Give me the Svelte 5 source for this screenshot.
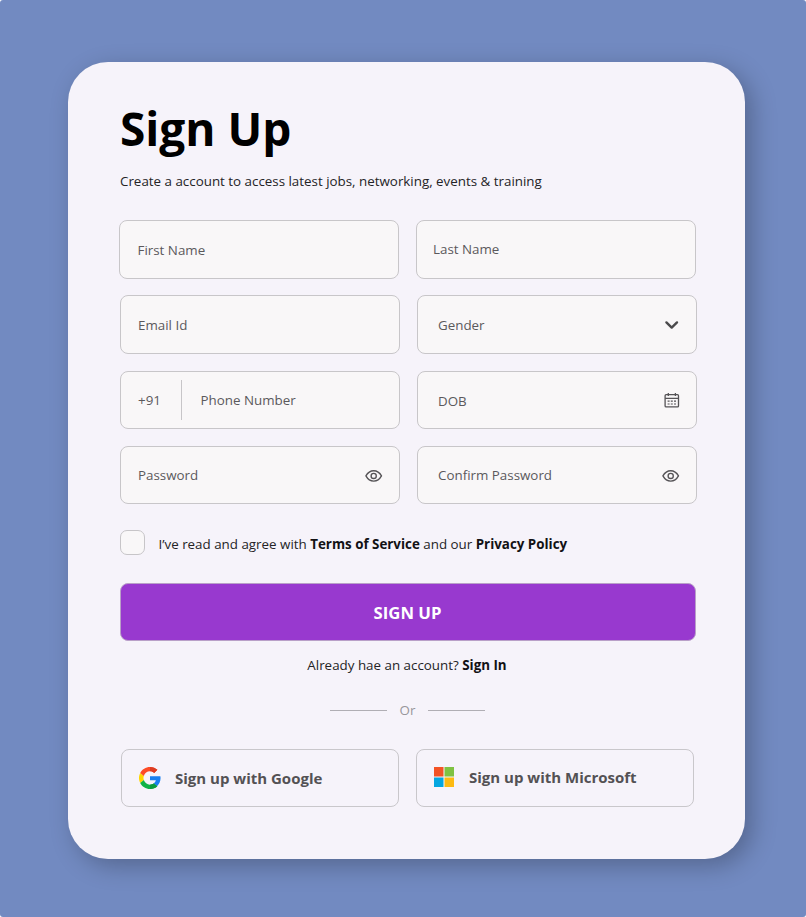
<script>
  const rows = [
    [{ label: 'First Name', pad: 17.5 }, { label: 'Last Name', pad: 16, lift: true }],
    [{ label: 'Email Id', pad: 17 }, { label: 'Gender', pad: 20, icon: 'chevron' }],
    [{ label: 'Phone Number', pad: 17, prefix: '+91' }, { label: 'DOB', pad: 20, icon: 'calendar', drop: true }],
    [{ label: 'Password', pad: 17, icon: 'eye' }, { label: 'Confirm Password', pad: 20, icon: 'eye' }]
  ];
</script>

{#snippet icon(name)}
  {#if name === 'chevron'}
    <svg class="icon" width="18" height="18" viewBox="0 0 18 18" fill="none" stroke="#4b4a4c" stroke-width="2.4" stroke-linecap="round" stroke-linejoin="round">
      <path d="M4.4 6.4 9.7 11.600l5.300-5.200" />
    </svg>
  {:else if name === 'calendar'}
    <svg class="icon" width="18" height="18" viewBox="0 0 18 18" fill="none" stroke="#555356" stroke-width="1.3">
      <rect x="3.1" y="3.7" width="13.4" height="12.2" rx="1" />
      <path d="M3.1 7.3h13.4M6.3 2.100v3M13.4 2.100v3" />
      <path d="M5.600 10.100h2M8.800 10.100h2M12 10.100h2M5.600 13h2M8.800 13h2M12 13h2" stroke-width="1.2" />
    </svg>
  {:else}
    <svg class="icon" width="18" height="18" viewBox="0 0 18 18" fill="none" stroke="#555356" stroke-width="1.35">
      <path d="M.9 9.9C2.700 6.700 5.500 4.700 8.700 4.700s6 2 7.800 5.200c-1.800 3.200-4.600 5.200-7.800 5.200S2.700 13.100.9 9.900z" stroke-linejoin="round" />
      <circle cx="8.7" cy="9.9" r="2.6" />
    </svg>
  {/if}
{/snippet}

<main class="page">
  <section class="card">
    <h1>Sign Up</h1>
    <p class="intro">Create a account to access latest jobs, networking, events &amp; training</p>

    <div class="fields">
      {#each rows as row, i}
        <div class="row" class:first={i === 0} class:short={i > 1}>
          {#each row as f}
            <div class="field" class:lift={f.lift} class:drop={f.drop} style="padding-left: {f.pad}px">
              {#if f.prefix}
                <span class="prefix">{f.prefix}</span>
                <span class="divider"></span>
              {/if}
              <span class="label">{f.label}</span>
              {#if f.icon}{@render icon(f.icon)}{/if}
            </div>
          {/each}
        </div>
      {/each}
    </div>

    <div class="agree">
      <span class="box"></span>
      <span>I’ve read and agree with <b>Terms of Service</b> and our <b>Privacy Policy</b></span>
    </div>

    <button class="submit">SIGN UP</button>
    <p class="signin">Already hae an account? <b>Sign In</b></p>

    <div class="or"><i></i><span>Or</span><i></i></div>

    <div class="social">
      <button class="provider google">
        <svg width="22" height="22" viewBox="0 0 48 48">
          <path fill="#1a7ff0" d="M47 24.500c0-1.600-.1-3.100-.4-4.500H24v9h12.700c-.6 3-2.200 5.400-4.700 7.100l7.300 5.700c4.500-4.200 7.700-10.300 7.700-17.300z" />
          <path fill="#fed500" d="M10.500 28.600A14.500 14.500 0 0 1 10.500 19.400L2.600 13.200a24 24 0 0 0 0 21.600z" />
          <path fill="#10b347" d="M24 48c6.500 0 11.900-2.100 15.900-5.800L32.200 36.200C30 37.700 27.200 38.500 24 38.500c-6.300 0-11.600-4.200-13.500-9.900L2.600 34.800C6.500 42.600 14.600 48 24 48z" />
          <path fill="#0a9a3e" d="M24 48c6.500 0 11.900-2.100 15.900-5.800L32.200 36.200C30 37.700 27.200 38.500 24 38.500z" />
          <path fill="#fd4b26" d="M24 9.500c3.500 0 6.700 1.200 9.200 3.600l6.900-6.900C35.900 2.400 30.500 0 24 0 14.600 0 6.500 5.400 2.600 13.200l7.900 6.200C12.400 13.700 17.700 9.500 24 9.500z" />
          <path fill="#dc3c22" d="M24 9.500c3.500 0 6.700 1.200 9.200 3.600l6.900-6.900C35.900 2.400 30.500 0 24 0z" />
        </svg>
        <span>Sign up with Google</span>
      </button>
      <button class="provider microsoft">
        <svg width="20" height="20" viewBox="0 0 20 20">
          <path fill="#f35325" d="M0 0h9.500v9.500H0z" />
          <path fill="#7fc242" d="M10.500 0H20v9.500h-9.500z" />
          <path fill="#05a6e0" d="M0 10.500h9.500V20H0z" />
          <path fill="#fdba12" d="M10.500 10.500H20V20h-9.500z" />
        </svg>
        <span>Sign up with Microsoft</span>
      </button>
    </div>
  </section>
</main>

<style>
  :global(body) { background: #fff; }
  .page {
    box-sizing: border-box;
    height: 917px;
    padding: 62px 61px 58px 68px;
    border-radius: 3px;
    background: #728ac1;
    font-family: 'Open Sans', sans-serif;
    font-size: 13.36px;
    line-height: 20px;
    color: #242326;
    overflow: hidden;
  }
  .card {
    box-sizing: border-box;
    height: 797px;
    padding: 33px 48px 0 52px;
    border-radius: 40px;
    background: #f6f3fa;
    box-shadow: 7px 7px 24px rgba(0, 0, 0, .26);
  }
  h1 { margin: 0; font-size: 46px; line-height: 66px; font-weight: 700; color: #000; }
  p { margin: 0; white-space: nowrap; }
  .intro { margin-top: 10px; }
  .fields { display: flex; flex-direction: column; gap: 17px; margin-top: 29px; }
  .row { display: flex; gap: 17px; }
  .row.first { margin: 0 0 -1px -1px; }
  .field {
    box-sizing: border-box;
    display: flex;
    align-items: center;
    width: 280px;
    height: 59px;
    padding-right: 16px;
    border: 1px solid #c8c6c9;
    border-radius: 8px;
    background: #f9f7f8;
    color: #5b595c;
  }
  .short .field { height: 58px; }
  .lift { padding-bottom: 2px; }
  .drop { padding-top: 2px; }
  .drop .icon { margin-top: -2px; }
  .prefix { width: 42.5px; }
  .divider { width: 1px; height: 40px; margin-right: 19px; background: #c7c5c8; }
  .icon { display: block; margin-left: auto; }
  .agree { display: flex; align-items: center; gap: 13.5px; height: 25px; margin-top: 26px; white-space: nowrap; }
  .agree > span:last-child { padding-top: 2px; }
  .box { box-sizing: border-box; width: 25px; height: 25px; border: 1px solid #c7c5c8; border-radius: 7px; background: #f9f7f8; }
  b { font-weight: 700; color: #121114; }
  button { font: inherit; box-sizing: border-box; }
  .submit {
    display: block;
    width: 576px;
    height: 58px;
    margin-top: 28px;
    padding: 1px 1px 0 0;
    border: 1px solid #b9a0c8;
    border-radius: 8px;
    background: #9839cf;
    color: #fff;
    font-size: 16.7px;
    font-weight: 700;
  }
  .signin { margin-top: 14px; width: 574px; text-align: center; }
  .or { display: flex; align-items: center; justify-content: center; gap: 12.5px; width: 575px; margin-top: 25px; color: #98969b; }
  .or i { width: 57px; height: 1px; background: #b0aeb4; }
  .social { display: flex; gap: 17px; margin: 29px 0 0 1px; }
  .provider {
    display: flex;
    align-items: center;
    width: 278px;
    height: 58px;
    padding: 0 0 0 17px;
    border: 1px solid #c9c7cb;
    border-radius: 8px;
    background: transparent;
    color: #535154;
    font-size: 15px;
    font-weight: 700;
    white-space: nowrap;
  }
  .google { gap: 14px; }
  .microsoft { gap: 15px; padding: 0 0 2px 17px; }
</style>
